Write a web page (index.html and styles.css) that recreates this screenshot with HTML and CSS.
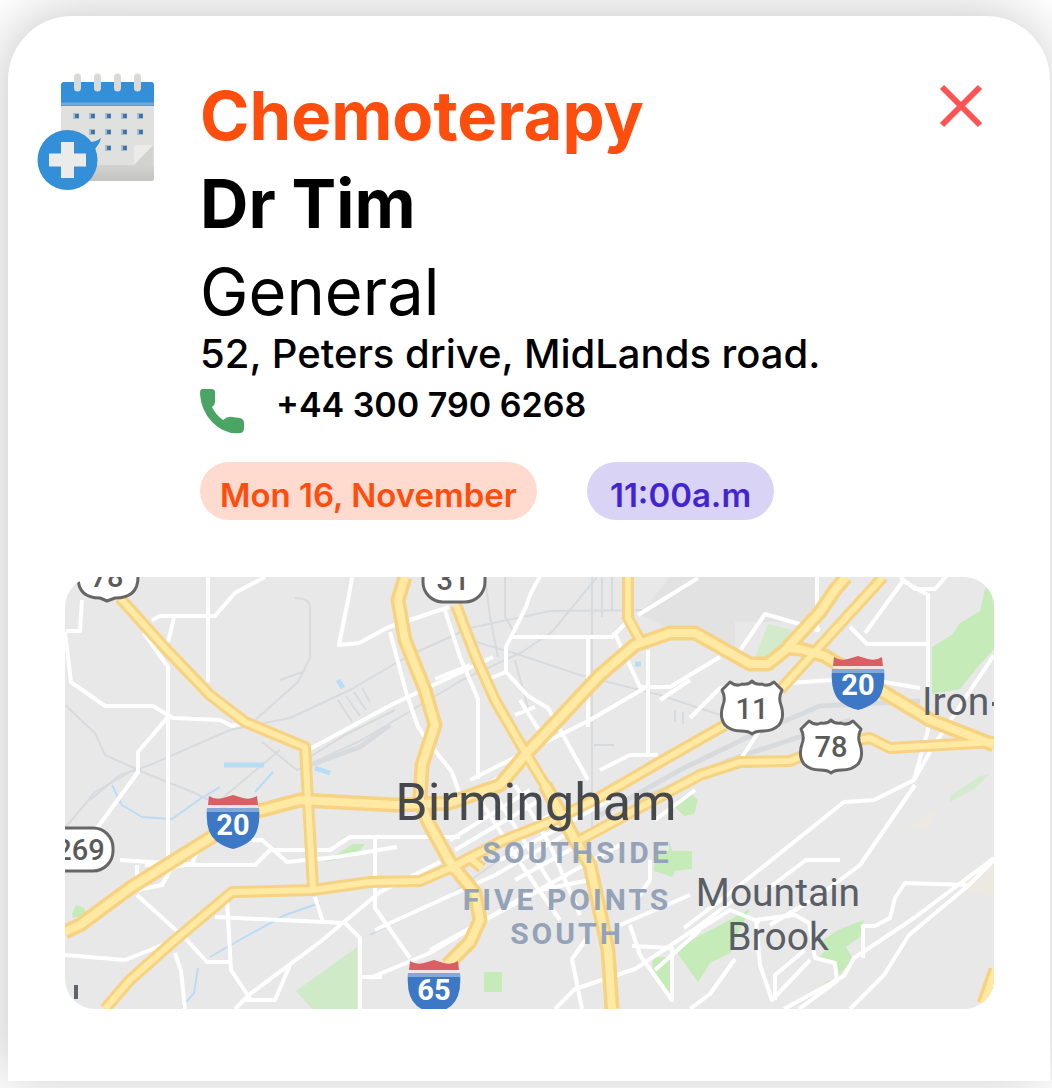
FILE: index.html
```html
<!DOCTYPE html>
<html lang="en">
<head>
<meta charset="utf-8">
<meta name="viewport" content="width=device-width, initial-scale=1">
<title>Appointment</title>
<link rel="stylesheet" href="styles.css">
</head>
<body>
<main class="card">
  <header class="summary">
    <svg class="calendar" viewBox="37 73 118 118" aria-hidden="true">
      <defs>
        <linearGradient id="fold" x1="0" y1="0" x2="0" y2="1"><stop offset="0" stop-color="#d2d2d0"/><stop offset="1" stop-color="#c3c3c1"/></linearGradient>
      </defs>
      <rect x="61" y="83" width="93" height="98" rx="3" fill="#e0e0de"/>
      <path d="M61 165h93v13a3 3 0 0 1-3 3H64a3 3 0 0 1-3-3z" fill="url(#fold)"/>
      <path d="M134 165l19-20v20z" fill="#d2d2d0"/>
      <path d="M134 165v-17q0-3 3-3h16z" fill="#ebebe9"/>
      <path d="M61 106V85q0-3 3-3h87q3 0 3 3v21z" fill="#348fd9"/>
      <path d="M61 104h93" stroke="#70aadb" stroke-width="3"/>
      <path d="M77.500 77v11M97.500 77v11M117.500 77v11M137.500 77v11" stroke="#d9d9d6" stroke-width="7" stroke-linecap="round"/>
      <path d="M73 116h76M89 132h58M89 148h38" stroke="#a9bccb" stroke-width="6" stroke-dasharray="6 10"/>
      <path d="M75 116h70M91 132h54M91 148h36" stroke="#3e76a8" stroke-width="4" stroke-dasharray="4 12"/>
      <circle cx="67.500" cy="160" r="30" fill="#348fd9"/>
      <path d="M90 142q6 0 11-4-1 5-6 11z" fill="#348fd9"/>
      <path d="M67.500 142v36M49 160h37" stroke="#ebebe9" stroke-width="13"/>
    </svg>
    <div class="details">
      <h1 class="title">Chemoterapy</h1>
      <h2 class="doctor">Dr Tim</h2>
      <p class="department">General</p>
      <p class="address">52, Peters drive, MidLands road.</p>
      <p class="phone">
        <svg class="handset" viewBox="0 0 44 46" aria-hidden="true"><path d="M2 1h9q4 0 4 3v10q0 3-3 5 3 7 11 13 5-4 9-3l8 1q4 1 4 5v5q0 5-4 5Q25 47 12 34 1 22 0 6 0 1 2 1z" fill="#4aa564"/></svg>
        <a href="tel:+443007906268">+44 300 790 6268</a>
      </p>
      <div class="slots">
        <time class="pill pill-date">Mon 16, November</time>
        <time class="pill pill-time">11:00a.m</time>
      </div>
    </div>
    <button class="close" type="button" aria-label="Close">
      <svg viewBox="0 0 44 44" aria-hidden="true"><path d="M3 3l38 38M41 3L3 41" stroke="#ff5252" stroke-width="6"/></svg>
    </button>
  </header>

  <svg class="map" viewBox="65 577 929 432" role="img" aria-label="Map of Birmingham">
    <defs>
      <g id="interstate">
        <path d="M-26-16h52q2 24-9 33-8 6-17 8-9-2-17-8-11-9-9-33z" fill="#3c78c6"/>
        <path d="M-26-14h52" stroke="#82a9d8" stroke-width="4"/>
        <path d="M-25-18h50" stroke="#f4e3e6" stroke-width="3"/>
        <path d="M-24-28q6 4 14 2l10-3 10 3q8 2 14-2l1 9h-50z" fill="#d95f62"/>
      </g>
      <g id="usroute">
        <path d="M-22-25q6 5 12 2 7 1 10-3 3 4 10 3 6 3 12-2l8 8q-4 8-1 15 4 12-2 20-6 6-16 6-8 0-11 3-3-3-11-3-10 0-16-6-6-8-2-20 3-7-1-15z" fill="#fff" stroke="#666" stroke-width="3" stroke-linejoin="round"/>
      </g>
    </defs>
    <rect x="65" y="577" width="929" height="432" fill="#e8e8e8"/>
    <path d="M670 577h145v45h-80v30l-60-20-35-18z" fill="#e2e2e2"/>

    <g class="parks">
      <path d="M932 647l20-12 8-12 20-12 5-22 9-12v72l-18 20-16 20-28 5z"/>
      <path d="M755 658l13-34 24 6-16 28z" opacity=".6"/>
      <path d="M325 862l28-18 12 0-10 12z"/>
      <path d="M296 991l61-44v62h-45z" opacity=".7"/>
      <path d="M72 914l4-9 8 3 3 6-14 4z"/>
      <path d="M484 972h18v20h-18zM677 800l12-8 9 8-4 14-10 2-8-8zM655 853l14-2v-13l3 13h20v18l-17 2-3 6-18-6z"/>
      <path d="M676 950l10-7 64-34-12 24-8 20-20 10-12 19-18-25zM652 957h18v37l-17-22z"/>
      <path d="M820 942l20-13 24-9-4 17-14 10 7 12-14 16-7-15-14-2 10-10zM816 990l13-10 3 2-12 10z"/>
      <path d="M950 802l26-14 14-14-10 2-30 20z" opacity=".5"/>
    </g>
    <path d="M960 880l34-24v40l-24-5zM905 830l34-22-10 20z" fill="#ebe9e2"/>

    <g class="rails">
      <path d="M65 705l30 28 10 22 40 18 50 20 40 20M90 800l30-25 30-10 80-35 60-12 60-28 60-35 60-27 80-17 100-1"/>
      <path d="M295 598q15 0 15 10v50l-12 24-45 40M280 680l25-9M262 742l35 28 65-30 100-60 60-28 30-20 45-55M305 760l40-25 50-25" />
      <path d="M470 640l50 15 60 20 80 20 60 20M485 577l5 40 8 40M505 577v40l12 20M515 660l15 55M592 577v260M602 577v40M612 577v34"/>
      <path d="M338 700l14 22M346 696l14 20M354 692l12 18M362 688l8 14M594 745h20M675 710v12M683 712v12"/>
      <path d="M220 800l60-50M65 828l30-36 35-20M370 935l80-40 70-50"/>
      <path class="yard" d="M310 765l50-18 30-22M600 815l80-45 70-34 70-30 100-5M640 800l90-40 120-40"/>
    </g>
    <g class="water">
      <path d="M224 765h40M338 680l5 8M315 768l15 5M635 664h6" stroke-width="5"/>
      <path d="M112 785l10 20 20 12 30 2 28-20 20-12M210 957l35-20 40-22 35-12M255 792l18-20M198 968l-4 25-12 14" stroke-width="2"/>
    </g>

    <g class="streets">
      <path d="M208 577v105M82 600l-2 31h-14M65 632l6 50 34 24h48l20 12 47 2 12 6 20-6M168 714v155M152 620l8-4h55l20-23 30-16M174 618l-6 24M144 633l24 34v50l-30 35v20l-35 48-35 50M352 577l-3 18-10 50 20-2 30-16 60-20M168 870l15-6M308 750l85-46 100-47"/>
      <path d="M444 607l16 50 18 42v80M390 632l16 60 12 35 14 20 20 25 12 35M470 665l-35 14M540 577q-10 15-14 30l-20 40v25l-20 8M506 672l22 24 20 12 40 72M510 637h102l18-18M614 632l26 55h30l50-30M588 637v90M648 650v105M540 745l50-25 60-35M600 770l30-15h28M638 615l60-37M515 715l20-8M520 700l20 32M470 780l60-30M475 790l60-30"/>
      <path d="M735 658l30-44 55 16M690 680l-30 20M817 577v55M850 627l17 17h63M865 633l38-52 25 14v135l-14 50M900 577l15 12h20l14-16M690 718l30-30 70-5 70-5 60 10M740 760l20-30M994 655l-60 90-20 35-40 20-30 2-100 80-60 46M695 790l-40 30"/>
      <path d="M700 930l-45 40M915 785l-55 80-40 30-50 30M840 860h-34l-40 30M994 858l-80 60-60 40-10 18-60 33M994 860l-25 25-60 50-25 40-34 34M970 885l-65-2-10 15-5 20-15 8h-12v32"/>
      <path d="M755 920l40-5 14 8 6 35 20 5 2 18-38 28M756 920l4 45 12 35 38-40M775 1000v-25l30-25M690 935l40-25 30 12M690 1009l20-15 25-35"/>
      <path d="M65 955l60 5 50-20M137 895l50 45 20 22h24M227 900l4 70 20 30M175 953l6 18 4 38M235 1009l15-15 70-52 60-50 60-30M290 965l-15 35h-30M315 897l8 25M215 917l130 6 15 15v71M360 977h22M137 865v25l25-5 10-18 20-3 6-15 14-8 50-1 25 22 50-5 60-10M145 865h110l15-15h60l20-13h110M375 838v70l35 50M375 930l120-55 70-40M370 978l60-25 100-60M120 860l80 5"/>
      <path d="M450 840l80-50M455 850l85-50M470 860l90-50M480 800l45 70 35 50M495 795l60 95M515 785l35 60 30 70M500 860l110-60M515 880l100-55M530 895l90-50M430 950l110-60 50-10M555 1009l20-20 60-20 60-40 40-30M582 1009l-10-50 14-20M630 925l10 30 32 45v-52l-40-2M620 925l70-30M650 860v20l-14 20"/>
    </g>

    <g class="casing">
      <path d="M120 598l45 50 45 47 35 27 60 25 3 53 5 88M628 577v41l12 22M456 605l19 50 20 45 30 52 20 33 30 55M105 1009l25-29 45-40 57-48 81-2 57-8 50-1 30-13 50-26 50-20 50-25 60-35 65-37M780 690l103-113M580 840l70-38 50-27 40-13 50-1 40-16 40-7 20 10 104-6M450 870l20-12 12 10"/>
      <path class="major" d="M405 577l-7 23 7 40 20 50 10 35-13 40-2 35 8 22 22 40 25 31 5 27-10 22-23 23M65 932l15-7 50-37 80-50 45-26 45-12 95 5 55-2 50-18 25-30 75-80 35-30 35-12h25l55 31h18l20-16 12 1 25 7 55 34 50 30 64 25M846 577l-11 13-15 22-32 35M545 785l30 55 15 25 10 47 8 38 4 59M996 970l-12 34"/>
    </g>
    <g class="highway">
      <path d="M120 598l45 50 45 47 35 27 60 25 3 53 5 88M628 577v41l12 22M456 605l19 50 20 45 30 52 20 33 30 55M105 1009l25-29 45-40 57-48 81-2 57-8 50-1 30-13 50-26 50-20 50-25 60-35 65-37M780 690l103-113M580 840l70-38 50-27 40-13 50-1 40-16 40-7 20 10 104-6M450 870l20-12 12 10"/>
      <path class="major" d="M405 577l-7 23 7 40 20 50 10 35-13 40-2 35 8 22 22 40 25 31 5 27-10 22-23 23M65 932l15-7 50-37 80-50 45-26 45-12 95 5 55-2 50-18 25-30 75-80 35-30 35-12h25l55 31h18l20-16 12 1 25 7 55 34 50 30 64 25M846 577l-11 13-15 22-32 35M545 785l30 55 15 25 10 47 8 38 4 59M996 970l-12 34"/>
    </g>

    <g class="shields">
      <use href="#interstate" x="233" y="824"/><text class="on-blue" x="233" y="835">20</text>
      <use href="#interstate" x="858" y="685"/><text class="on-blue" x="858" y="695">20</text>
      <use href="#interstate" x="434" y="989"/><text class="on-blue" x="434" y="1000">65</text>
      <use href="#usroute" x="752" y="707"/><text x="752" y="719">11</text>
      <use href="#usroute" x="831" y="746"/><text x="831" y="757">78</text>
      <rect x="423" y="545" width="62" height="57" rx="20" fill="#fff" stroke="#666" stroke-width="3"/><text x="453" y="590">31</text>
      <path d="M78 577q0 21 22 21l7 3 8-3q23 0 23-21v-15H78z" fill="#fff" stroke="#666" stroke-width="3"/><text x="107" y="587">78</text>
      <rect x="40" y="828" width="73" height="43" rx="20" fill="#fff" stroke="#666" stroke-width="3"/><text x="80" y="860">269</text>
    </g>
    <g class="places">
      <text class="city" x="536" y="820">Birmingham</text>
      <text x="778" y="906">Mountain</text>
      <text x="778" y="950">Brook</text>
      <text class="start" x="922" y="715">Iron</text>
      <path d="M992 704h4M76 985v14" stroke="#5f6368" stroke-width="4"/>
      <text class="area" x="577" y="863">SOUTHSIDE</text>
      <text class="area" x="567" y="910">FIVE POINTS</text>
      <text class="area" x="567" y="944">SOUTH</text>
    </g>
  </svg>
</main>
</body>
</html>
```
FILE: styles.css
```css
* {
  box-sizing: border-box;
}

body {
  margin: 0;
  padding: 16px 2px 7px 8px;
  background: #fff;
  color: #000;
  font-family: Inter, "Liberation Sans", sans-serif;
}

h1, h2, p {
  margin: 0;
}

.card {
  padding: 56px 56px 72px 57px;
  border-radius: 64px 64px 0 0;
  background: #fff;
  box-shadow: -4px -4px 56px rgba(0, 0, 0, 0.22);
}

.summary {
  display: grid;
  grid-template-columns: 118px 1fr auto;
  column-gap: 45px;
  align-items: start;
  margin: 0 11px 0 -28px;
}

.calendar {
  width: 118px;
  margin-top: 1px;
}

.title, .doctor {
  font-size: 67px;
  line-height: 88px;
  font-weight: 700;
}

.title {
  color: #ff4d0d;
}

.department {
  font-size: 65px;
  line-height: 88px;
  font-weight: 400;
}

.address {
  font-size: 40px;
  line-height: 36px;
  font-weight: 500;
  white-space: nowrap;
}

.phone {
  display: flex;
  align-items: flex-start;
  gap: 32px;
  padding-top: 16px;
  font-size: 34px;
  line-height: 34px;
  font-weight: 600;
}

.phone a {
  color: inherit;
  text-decoration: none;
}

.handset {
  width: 44px;
  height: 46px;
}

.slots {
  display: flex;
  gap: 50px;
  margin-top: 28px;
}

.pill {
  padding: 8px 20px 0;
  border-radius: 29px;
  font-size: 33px;
  line-height: 50px;
  font-weight: 600;
  white-space: nowrap;
}

.pill-date {
  background: #ffdace;
  color: #ff4d0d;
}

.pill-time {
  padding: 8px 23px 0;
  background: #d9d3f5;
  color: #4325d0;
}

.close {
  width: 44px;
  height: 44px;
  margin-top: 12px;
  padding: 0;
  border: 0;
  background: none;
}

.close svg {
  display: block;
}

.map {
  display: block;
  width: 100%;
  margin-top: 57px;
  border-radius: 30px;
  font-family: Roboto, sans-serif;
}

.map path {
  stroke-linejoin: round;
}

.parks {
  fill: #c4ebb8;
}

.rails, .water, .streets, .casing, .highway {
  fill: none;
}

.rails {
  stroke: #d8dbde;
  stroke-width: 2;
}

.rails .yard {
  stroke-width: 5;
}

.water {
  stroke: #b9dcf5;
}

.streets {
  stroke: #fff;
  stroke-width: 4;
}

.casing {
  stroke: #f6d281;
  stroke-width: 12;
}

.casing .major {
  stroke-width: 15;
}

.highway {
  stroke: #ffe9a3;
  stroke-width: 6;
}

.highway .major {
  stroke-width: 8;
}

.shields text, .places text {
  text-anchor: middle;
}

.shields {
  fill: #5a5a5a;
  font-size: 29px;
  font-weight: 500;
}

.shields .on-blue {
  fill: #fff;
  font-weight: 700;
}

.places {
  fill: #5a5e66;
  font-size: 39px;
}

.places .city {
  fill: #45494d;
  font-size: 52px;
}

.places .start {
  text-anchor: start;
}

.places .area {
  fill: #94a3b8;
  font-size: 30px;
  font-weight: 700;
  letter-spacing: 3px;
}
```
